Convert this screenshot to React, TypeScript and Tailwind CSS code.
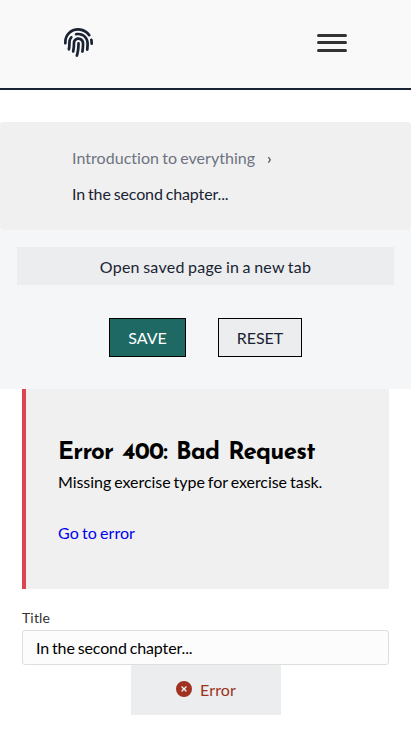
import { FaFingerprint } from "react-icons/fa";
import { FaCircleXmark } from "react-icons/fa6";

function Header() {
  return (
    <header className="flex h-[90px] items-start justify-between border-b-2 border-[#1a2333] bg-[#f9f9f9] pl-16 pr-16">
      <a href="#home" aria-label="Home" className="mt-[28px] text-[#1a2333]">
        <FaFingerprint size={29} />
      </a>
      <button aria-label="Menu" className="mt-[34px] flex w-[30px] flex-col">
        <span className="h-[3px] rounded-sm bg-[#333333]" />
        <span className="mt-1 h-[3px] rounded-sm bg-[#333333]" />
        <span className="mt-[5px] h-[3px] rounded-sm bg-[#333333]" />
      </button>
    </header>
  );
}

function Breadcrumbs() {
  return (
    <nav className="mt-8 h-[108px] rounded-[3px] bg-[#f0f0f0] pl-[72px] pt-[18px] leading-9 text-[#1a2333]">
      <div className="flex">
        <a href="#course" className="w-[183px] whitespace-nowrap tracking-[0.04px] text-[#6e7381] [font-variant-ligatures:none] [word-spacing:-1px]">Introduction to everything</a>
        <span className="ml-3 text-[#333333]">›</span>
      </div>
      <div className="tracking-[-0.13px] [word-spacing:-1px]">In the second chapter...</div>
    </nav>
  );
}

function Toolbar() {
  return (
    <section className="h-[159px] bg-[#f4f6f8] px-[17px] pt-[17px] text-[#1a2333]">
      <button className="block h-[38px] w-full bg-[#ebedee] pt-0.5 tracking-[0.26px] [word-spacing:-1px]">
        Open saved page in a new tab
      </button>
      <div className="mt-[33px] flex justify-center gap-8">
        <button className="h-[39px] w-[77px] border border-black bg-[#1f6964] pt-px text-white">SAVE</button>
        <button className="h-[39px] w-[84px] border border-black bg-[#ebedee] pt-px">RESET</button>
      </div>
    </section>
  );
}

function ErrorPanel() {
  return (
    <section className="h-[200px] border-l-4 border-[#de4354] bg-[#f0f0f0] pl-8 pt-12 text-black">
      <h2 className="h-[33px] whitespace-nowrap pt-0.5 font-['Josefin_Sans','Lato',sans-serif] text-2xl font-bold leading-[29px] tracking-[-0.72px] [word-spacing:2px]">
        Error 400: Bad Request
      </h2>
      <p className="leading-6 tracking-[-0.05px] [word-spacing:-1px]">Missing exercise type for exercise task.</p>
      <a href="#error" className="mt-[27px] block leading-6 tracking-[0.06px] text-[#0000ee] [word-spacing:-1px]">Go to error</a>
    </section>
  );
}

export default function App() {
  return (
    <div className="h-[731px] overflow-hidden bg-white font-['Lato',sans-serif] text-base">
      <Header />
      <Breadcrumbs />
      <Toolbar />
      <main className="px-[22px]">
        <ErrorPanel />
        <label htmlFor="title" className="mt-[19px] block h-[22px] text-sm leading-5 tracking-[0.15px] text-[#333333]">Title</label>
        <input
          id="title"
          defaultValue="In the second chapter..."
          className="block h-[35px] w-full rounded-[3px] border border-[#dedede] bg-[#fcfcfc] px-[13px] tracking-[-0.13px] text-black outline-none [word-spacing:-1px]"
        />
        <div className="ml-[109px] flex h-[50px] w-[150px] items-center justify-center bg-[#ebedee] text-[#9f3220]">
          <FaCircleXmark size={16} className="mr-2 -mt-0.5" />
          <span className="tracking-[0.16px]">Error</span>
        </div>
      </main>
    </div>
  );
}
